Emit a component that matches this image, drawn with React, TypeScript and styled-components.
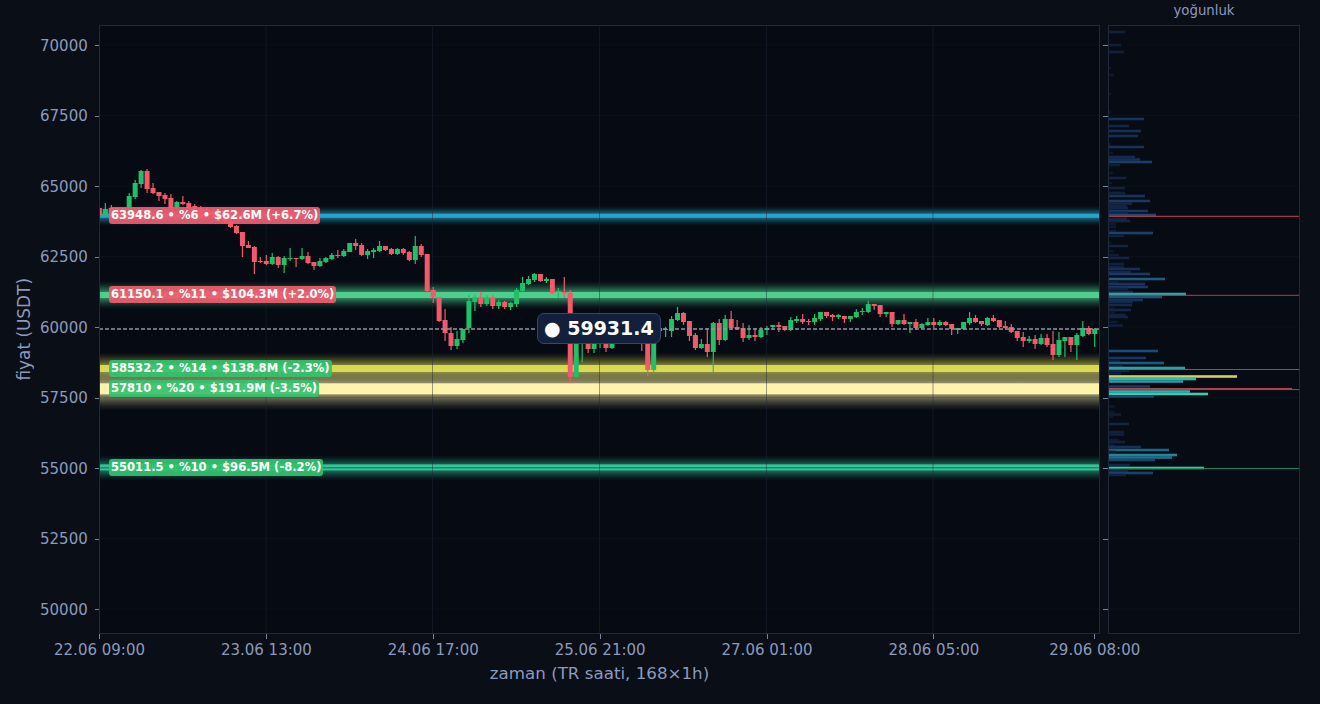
import React from 'react';
import styled, { createGlobalStyle } from 'styled-components';

type Candle = [number, number, number, number, 'r' | 'g'];

// y values are pixels on the page, read off the price scale: 70000 = 45, 50000 = 609
const priceY = (p: number) => 45 + (70000 - p) * 0.0282;
const candleX = (i: number) => 99.4 + 5.96 * i;

const candles: Candle[] = [
  [208, 215, 207, 216, 'r'], [209, 215, 203, 217, 'g'], [208, 214, 205, 215, 'r'], [208, 214, 208, 215, 'g'],
  [208, 214, 208, 215, 'g'], [196, 208, 193, 210, 'g'], [183, 197, 180, 199, 'g'], [171, 184, 170, 188, 'g'],
  [171, 189, 169, 193, 'r'], [188, 193, 183, 194, 'r'], [192, 196, 192, 201, 'r'], [195, 199, 193, 204, 'r'],
  [198, 208, 194, 210, 'r'], [202, 207, 201, 208, 'g'], [202, 204, 196, 205, 'r'], [203, 208, 201, 210, 'r'],
  [206, 212, 204, 214, 'r'], [208, 213, 206, 215, 'r'], [210, 215, 208, 217, 'r'], [212, 217, 210, 219, 'r'],
  [214, 219, 212, 221, 'r'], [216, 221, 214, 223, 'r'], [222, 227, 220, 228, 'r'], [226, 233, 225, 234, 'r'],
  [232, 246, 232, 257, 'r'], [245, 248, 241, 248, 'r'], [247, 262, 246, 274, 'r'], [261, 262, 257, 263, 'r'],
  [261, 264, 255, 265, 'r'], [257, 264, 253, 265, 'g'], [257, 265, 256, 268, 'r'], [258, 265, 256, 273, 'g'],
  [258, 259, 248, 261, 'g'], [258, 259, 258, 267, 'r'], [256, 259, 248, 260, 'g'], [256, 263, 252, 264, 'r'],
  [262, 266, 262, 270, 'r'], [261, 266, 258, 267, 'g'], [258, 262, 257, 263, 'g'], [255, 259, 253, 260, 'g'],
  [255, 256, 250, 258, 'r'], [251, 256, 249, 257, 'g'], [243, 252, 243, 252, 'g'], [243, 246, 239, 250, 'r'],
  [245, 255, 243, 256, 'r'], [251, 255, 249, 259, 'g'], [250, 252, 248, 258, 'g'], [246, 251, 241, 252, 'g'],
  [246, 250, 246, 251, 'r'], [249, 254, 248, 255, 'r'], [249, 254, 248, 255, 'g'], [249, 253, 248, 255, 'r'],
  [252, 260, 251, 261, 'r'], [246, 260, 236, 264, 'g'], [246, 255, 244, 257, 'r'], [254, 291, 254, 293, 'r'],
  [290, 297, 287, 303, 'r'], [297, 321, 297, 322, 'r'], [320, 333, 309, 341, 'r'], [333, 346, 327, 350, 'r'],
  [339, 346, 331, 349, 'g'], [329, 340, 329, 343, 'g'], [301, 328, 295, 333, 'g'], [297, 302, 295, 311, 'g'],
  [297, 304, 292, 307, 'r'], [297, 304, 295, 306, 'g'], [297, 306, 295, 309, 'r'], [302, 306, 300, 309, 'g'],
  [302, 307, 301, 309, 'r'], [303, 307, 302, 310, 'g'], [290, 304, 288, 307, 'g'], [283, 291, 277, 292, 'g'],
  [279, 284, 276, 285, 'g'], [274, 280, 273, 282, 'g'], [274, 281, 274, 282, 'r'], [279, 281, 277, 283, 'g'],
  [279, 293, 279, 294, 'r'], [291, 292, 288, 298, 'g'], [292, 293, 277, 298, 'r'], [293, 377, 290, 383, 'r'],
  [320, 377, 318, 378, 'g'], [335, 340, 330, 362, 'g'], [338, 349, 336, 353, 'r'], [338, 349, 336, 353, 'g'],
  [336, 340, 332, 348, 'g'], [340, 348, 336, 352, 'r'], [338, 348, 336, 349, 'g'], [332, 338, 330, 340, 'r'],
  [330, 336, 328, 338, 'g'], [332, 337, 330, 339, 'r'], [333, 338, 330, 340, 'g'], [334, 338, 330, 351, 'r'],
  [330, 370, 328, 376, 'r'], [330, 370, 328, 375, 'g'], [328, 331, 326, 334, 'g'], [329, 330, 327, 337, 'g'],
  [319, 331, 316, 337, 'g'], [313, 320, 307, 321, 'g'], [313, 322, 312, 325, 'r'], [321, 336, 321, 341, 'r'],
  [335, 348, 333, 350, 'r'], [344, 348, 339, 349, 'g'], [344, 352, 328, 357, 'r'], [323, 352, 322, 372, 'g'],
  [323, 340, 319, 345, 'r'], [319, 340, 315, 341, 'g'], [319, 328, 311, 330, 'r'], [327, 329, 320, 330, 'r'],
  [328, 338, 323, 342, 'r'], [335, 338, 325, 340, 'g'], [335, 337, 328, 341, 'r'], [330, 337, 327, 338, 'g'],
  [328, 330, 326, 335, 'g'], [325, 327, 325, 330, 'g'], [325, 327, 322, 332, 'r'], [326, 330, 326, 331, 'r'],
  [320, 330, 317, 331, 'g'], [319, 321, 316, 323, 'g'], [319, 322, 314, 324, 'r'], [321, 322, 319, 325, 'r'],
  [318, 322, 314, 325, 'g'], [312, 319, 312, 321, 'g'], [312, 316, 312, 318, 'r'], [315, 317, 314, 321, 'r'],
  [315, 317, 314, 319, 'g'], [316, 319, 316, 323, 'r'], [316, 319, 316, 322, 'g'], [312, 317, 309, 318, 'g'],
  [311, 312, 308, 315, 'g'], [304, 312, 301, 313, 'g'], [304, 306, 304, 310, 'r'], [305, 314, 305, 317, 'r'],
  [312, 314, 312, 317, 'g'], [312, 324, 312, 327, 'r'], [320, 324, 320, 325, 'g'], [320, 324, 314, 325, 'r'],
  [322, 324, 322, 333, 'g'], [322, 328, 319, 330, 'r'], [324, 328, 323, 329, 'g'], [322, 325, 318, 326, 'g'],
  [322, 325, 318, 328, 'r'], [322, 325, 320, 326, 'g'], [322, 325, 321, 326, 'r'], [324, 329, 324, 335, 'r'],
  [328, 330, 328, 334, 'g'], [322, 329, 322, 330, 'g'], [318, 323, 312, 325, 'g'], [318, 322, 315, 323, 'r'],
  [321, 324, 321, 326, 'r'], [318, 325, 317, 326, 'g'], [318, 321, 315, 322, 'r'], [320, 327, 320, 328, 'r'],
  [326, 328, 321, 329, 'r'], [327, 332, 324, 333, 'r'], [331, 338, 331, 341, 'r'], [337, 341, 332, 347, 'r'],
  [339, 341, 336, 343, 'g'], [339, 344, 335, 349, 'r'], [338, 344, 334, 345, 'g'], [338, 345, 334, 347, 'r'],
  [344, 355, 331, 360, 'r'], [340, 355, 332, 357, 'g'], [337, 341, 337, 357, 'g'], [337, 345, 337, 352, 'r'],
  [335, 345, 333, 360, 'g'], [328, 336, 321, 337, 'g'], [328, 334, 326, 335, 'r'], [329, 334, 328, 347, 'g'],
];

// [page y, width] of each row of the density histogram
const density: [number, number][] = [
  [32, 16], [45, 12], [52, 15], [68, 2], [75, 5], [94, 2], [112, 2], [119, 35], [126, 20], [131, 32], [136, 29],
  [144, 2], [147, 35], [153, 4], [157, 26], [159.5, 31], [162, 43], [165, 11], [173, 4], [178, 17], [183, 3],
  [188, 16], [193, 16], [196, 36], [201, 41], [203.5, 23], [206, 18], [208, 19], [211, 39], [213, 19], [215, 47],
  [219, 18], [221, 21], [224, 7], [227, 7], [231, 7], [233, 44], [236, 15], [243, 2], [246, 19], [251, 5], [255, 10],
  [258, 20], [264, 15], [267, 15], [269, 31], [272, 22], [274, 41], [279, 56], [282, 10], [284, 36], [287, 39],
  [289, 19], [292, 24], [294, 77], [297, 53], [300, 34], [302, 24], [305, 23], [308, 5], [310, 22], [312, 6],
  [315, 17], [317, 19], [322, 8], [325.5, 14], [351, 49], [358, 37], [361, 11], [363, 55], [366, 14], [368, 76],
  [371, 20], [373.5, 12], [376.5, 128], [379, 87], [381.5, 74], [386.5, 41], [391.5, 81], [394, 99], [396.5, 45],
  [406.5, 6], [412, 5], [414.5, 12], [417, 4], [424, 20], [432, 15], [434.5, 15], [440, 10], [442, 16], [445, 6],
  [447, 32], [450, 60], [452, 7], [455, 68], [457.5, 63], [460, 46], [465, 21], [468, 95], [471, 19], [473, 44], [475, 17],
];

const densityLines = [
  { y: 216.3, w: 192, color: '#c94052' },
  { y: 295.3, w: 192, color: '#b93c4e' },
  { y: 369.5, w: 192, color: '#1d8a5c' },
  { y: 389.6, w: 192, color: '#1d8a5c' },
  { y: 388.7, w: 183, color: '#e2525f' },
  { y: 468.6, w: 192, color: '#1d8a5c' },
];

const bands = [
  { id: 'b1', y: 215.8, glow: 10, core: 2, color: '#26a3c9', alpha: 0.8 },
  { id: 'b2', y: 295, glow: 14, core: 3, color: '#4ccf8d', alpha: 0.85 },
  { id: 'b3', y: 368.5, glow: 16, core: 3.5, color: '#d8d84f', alpha: 0.8 },
  { id: 'b4', y: 388.8, glow: 22, core: 5.5, color: '#fdf3aa', alpha: 0.85 },
  { id: 'b5', y: 468, glow: 13, core: 0.5, color: '#2fc797', alpha: 0.7 },
];

const levels = [
  { text: '63948.6 • %6 • $62.6M (+6.7%)', price: 63948.6, side: 'r' },
  { text: '61150.1 • %11 • $104.3M (+2.0%)', price: 61150.1, side: 'r' },
  { text: '58532.2 • %14 • $138.8M (-2.3%)', price: 58532.2, side: 'g' },
  { text: '57810 • %20 • $191.9M (-3.5%)', price: 57810, side: 'g' },
  { text: '55011.5 • %10 • $96.5M (-8.2%)', price: 55011.5, side: 'g' },
];

const yTicks = [70000, 67500, 65000, 62500, 60000, 57500, 55000, 52500, 50000];
const xTicks = [
  { label: '22.06 09:00', h: 28 }, { label: '23.06 13:00', h: 28 }, { label: '24.06 17:00', h: 28 },
  { label: '25.06 21:00', h: 28 }, { label: '27.06 01:00', h: 28 }, { label: '28.06 05:00', h: 27 },
  { label: '29.06 08:00', h: 0 },
];

const mix = (a: number[], b: number[], t: number) =>
  `rgb(${a.map((v, i) => Math.round(v + (b[i] - v) * t)).join(',')})`;

const densityColor = (w: number) => {
  if (w > 110) return '#d6cd62';
  const stops: [number, number[]][] = [
    [5, [13, 24, 44]], [40, [26, 55, 99]], [60, [31, 102, 134]], [80, [42, 176, 178]], [100, [62, 203, 176]],
  ];
  for (let i = 1; i < stops.length; i++) {
    if (w <= stops[i][0]) {
      const [w0, c0] = stops[i - 1];
      const [w1, c1] = stops[i];
      return mix(c0, c1, Math.max(0, (w - w0) / (w1 - w0)));
    }
  }
  return 'rgb(62,203,176)';
};

const GlobalStyle = createGlobalStyle`
  html, body { margin: 0; padding: 0; background: #0a0e16; }
  body { font-family: "DejaVu Sans", sans-serif; color: #8b9bbd; overflow: hidden; }
`;

const Page = styled.div`
  display: grid;
  grid-template-columns: 40px 59px 1001px 8px 192px 20px;
  grid-template-rows: 25px 609px 70px;
  width: 1320px;
  height: 704px;
`;

const YTitleCell = styled.div`
  grid-column: 1;
  grid-row: 2;
  display: flex;
  align-items: center;
  justify-content: center;
  padding-left: 8px;
`;

const YTitle = styled.span`
  writing-mode: vertical-rl;
  transform: rotate(180deg);
  font-size: 16.9px;
  white-space: nowrap;
`;

const TickColumn = styled.div<{ $col: number }>`
  grid-column: ${(p) => p.$col};
  grid-row: 1 / 4;
  display: flex;
  flex-direction: column;
  padding-top: 10.25px;
`;

const YTick = styled.div`
  flex: 0 0 70.5px;
  display: flex;
  align-items: center;
  justify-content: flex-end;
  gap: 7px;
  font-size: 15px;
`;

const TickMark = styled.i`
  display: block;
  width: 5px;
  height: 1px;
  background: #77869f;
`;

const DensityTitle = styled.div`
  grid-column: 5;
  grid-row: 1;
  text-align: center;
  font-size: 13.3px;
  line-height: 22px;
`;

const Plot = styled.div`
  grid-column: 3;
  grid-row: 2;
  position: relative;
  box-sizing: border-box;
  border: 1px solid #1e293b;
  background: #060a12;
`;

const DensityPanel = styled.div`
  grid-column: 5;
  grid-row: 2;
  box-sizing: border-box;
  border: 1px solid #1e293b;
  background: #070b13;
`;

const ChartSvg = styled.svg`
  display: block;
  width: 100%;
  height: 100%;
`;

const LevelTag = styled.div<{ $side: string }>`
  position: absolute;
  left: 9px;
  height: 17.4px;
  padding: 0 2px;
  border-radius: 3px;
  background: ${(p) => (p.$side === 'r' ? 'rgba(241, 91, 109, 0.92)' : 'rgba(50, 194, 110, 0.92)')};
  color: #fff;
  font-size: 11.55px;
  font-weight: 700;
  line-height: 17.4px;
  white-space: nowrap;
`;

const LastPrice = styled.div`
  position: absolute;
  left: 437px;
  top: 287px;
  padding: 3px 6px;
  border: 1.5px solid #35466b;
  border-radius: 7px;
  background: #12203b;
  color: #fff;
  font-size: 19px;
  font-weight: 700;
  line-height: 23px;
  white-space: nowrap;
`;

const XAxis = styled.div`
  grid-column: 3;
  grid-row: 3;
  display: flex;
  flex-direction: column;
  align-items: stretch;
`;

const XTicks = styled.div`
  display: flex;
  height: 29px;
`;

const XTick = styled.div<{ $w: number }>`
  position: relative;
  flex: 0 0 ${(p) => p.$w}px;
  border-left: 1px solid transparent;
  box-sizing: border-box;
  &::before {
    content: '';
    display: block;
    width: 1px;
    height: 5px;
    margin-left: -1px;
    background: #77869f;
  }
`;

const XLabel = styled.span`
  position: absolute;
  top: 7px;
  left: -0.5px;
  transform: translateX(-50%);
  font-size: 15px;
  white-space: nowrap;
`;

const XTitle = styled.div`
  text-align: center;
  font-size: 16.7px;
  line-height: 20px;
`;

const BandDefs = () => (
  <defs>
    {bands.map((b) => (
      <linearGradient key={b.id} id={b.id} x1="0" y1="0" x2="0" y2="1">
        {[0, 0.2, 0.4, 0.6, 0.8, 1, 0.8, 0.6, 0.4, 0.2, 0].map((t, i) => (
          <stop key={i} offset={i / 10} stopColor={b.color} stopOpacity={b.alpha * Math.pow(t, 1.4)} />
        ))}
      </linearGradient>
    ))}
  </defs>
);

const CandleMark = ({ c, i }: { c: Candle; i: number }) => {
  const color = c[4] === 'r' ? '#f25a6c' : '#20bf68';
  const x = candleX(i);
  return (
    <g fill={color}>
      <rect x={x - 0.6} y={c[2]} width={1.2} height={c[3] - c[2]} />
      <rect x={x - 2.5} y={c[0]} width={5} height={Math.max(1, c[1] - c[0])} />
    </g>
  );
};

const App = () => {
  return (
    <>
      <GlobalStyle />
      <Page>
        <YTitleCell>
          <YTitle>fiyat (USDT)</YTitle>
        </YTitleCell>

        <TickColumn $col={2}>
          {yTicks.map((t) => (
            <YTick key={t}>
              {t}
              <TickMark />
            </YTick>
          ))}
        </TickColumn>

        <Plot>
          {/* viewBox in page pixels so the data above can be used as is */}
          <ChartSvg viewBox="100 26 999 607">
            <BandDefs />
            {bands.map((b) => (
              <g key={b.id}>
                <rect x={99} y={b.y - b.glow} width={1002} height={b.glow * 2} fill={`url(#${b.id})`} />
                {b.core > 1 && (
                  <rect x={99} y={b.y - b.core} width={1002} height={b.core * 2} fill={b.color} />
                )}
              </g>
            ))}
            <rect x={99} y={464.4} width={1002} height={2.8} fill="#2fc797" />
            <rect x={99} y={468.2} width={1002} height={2.2} fill="#2fc797" />
            <g stroke="#1e293b">
              {yTicks.map((t) => (
                <line key={t} x1={99} x2={1100} y1={priceY(t)} y2={priceY(t)} strokeOpacity={0.22} />
              ))}
              {[266, 432.5, 599.5, 766.5, 933].map((x) => (
                <line key={x} x1={x} x2={x} y1={25} y2={634} strokeOpacity={0.45} />
              ))}
            </g>
            {candles.map((c, i) => (
              <CandleMark key={i} c={c} i={i} />
            ))}
            <line x1={99} x2={1100} y1={329} y2={329} stroke="#9297a1" strokeWidth={1.3} strokeDasharray="4 2" />
          </ChartSvg>

          {levels.map((l) => (
            <LevelTag key={l.price} $side={l.side} style={{ top: priceY(l.price) - 8.7 - 26 }}>
              {l.text}
            </LevelTag>
          ))}
          <LastPrice>● 59931.4</LastPrice>
        </Plot>

        <TickColumn $col={4}>
          {yTicks.map((t) => (
            <YTick key={t}>
              <TickMark />
            </YTick>
          ))}
        </TickColumn>

        <DensityTitle>yoğunluk</DensityTitle>
        <DensityPanel>
          <ChartSvg viewBox="1109 26 190 607">
            <g stroke="#1e293b" strokeOpacity={0.22}>
              {yTicks.map((t) => (
                <line key={t} x1={1108} x2={1300} y1={priceY(t)} y2={priceY(t)} />
              ))}
            </g>
            {density.map(([y, w]) => (
              <rect key={y} x={1109} y={y - 1.3} width={w} height={2.6} fill={densityColor(w)} />
            ))}
            {densityLines.map((l) => (
              <rect key={l.y} x={1109} y={l.y - 0.5} width={l.w} height={1} fill={l.color} />
            ))}
          </ChartSvg>
        </DensityPanel>

        <XAxis>
          <XTicks>
            {xTicks.map((t) => (
              <XTick key={t.label} $w={t.h * 5.96}>
                <XLabel>{t.label}</XLabel>
              </XTick>
            ))}
          </XTicks>
          <XTitle>zaman (TR saati, 168×1h)</XTitle>
        </XAxis>
      </Page>
    </>
  );
};

export default App;
